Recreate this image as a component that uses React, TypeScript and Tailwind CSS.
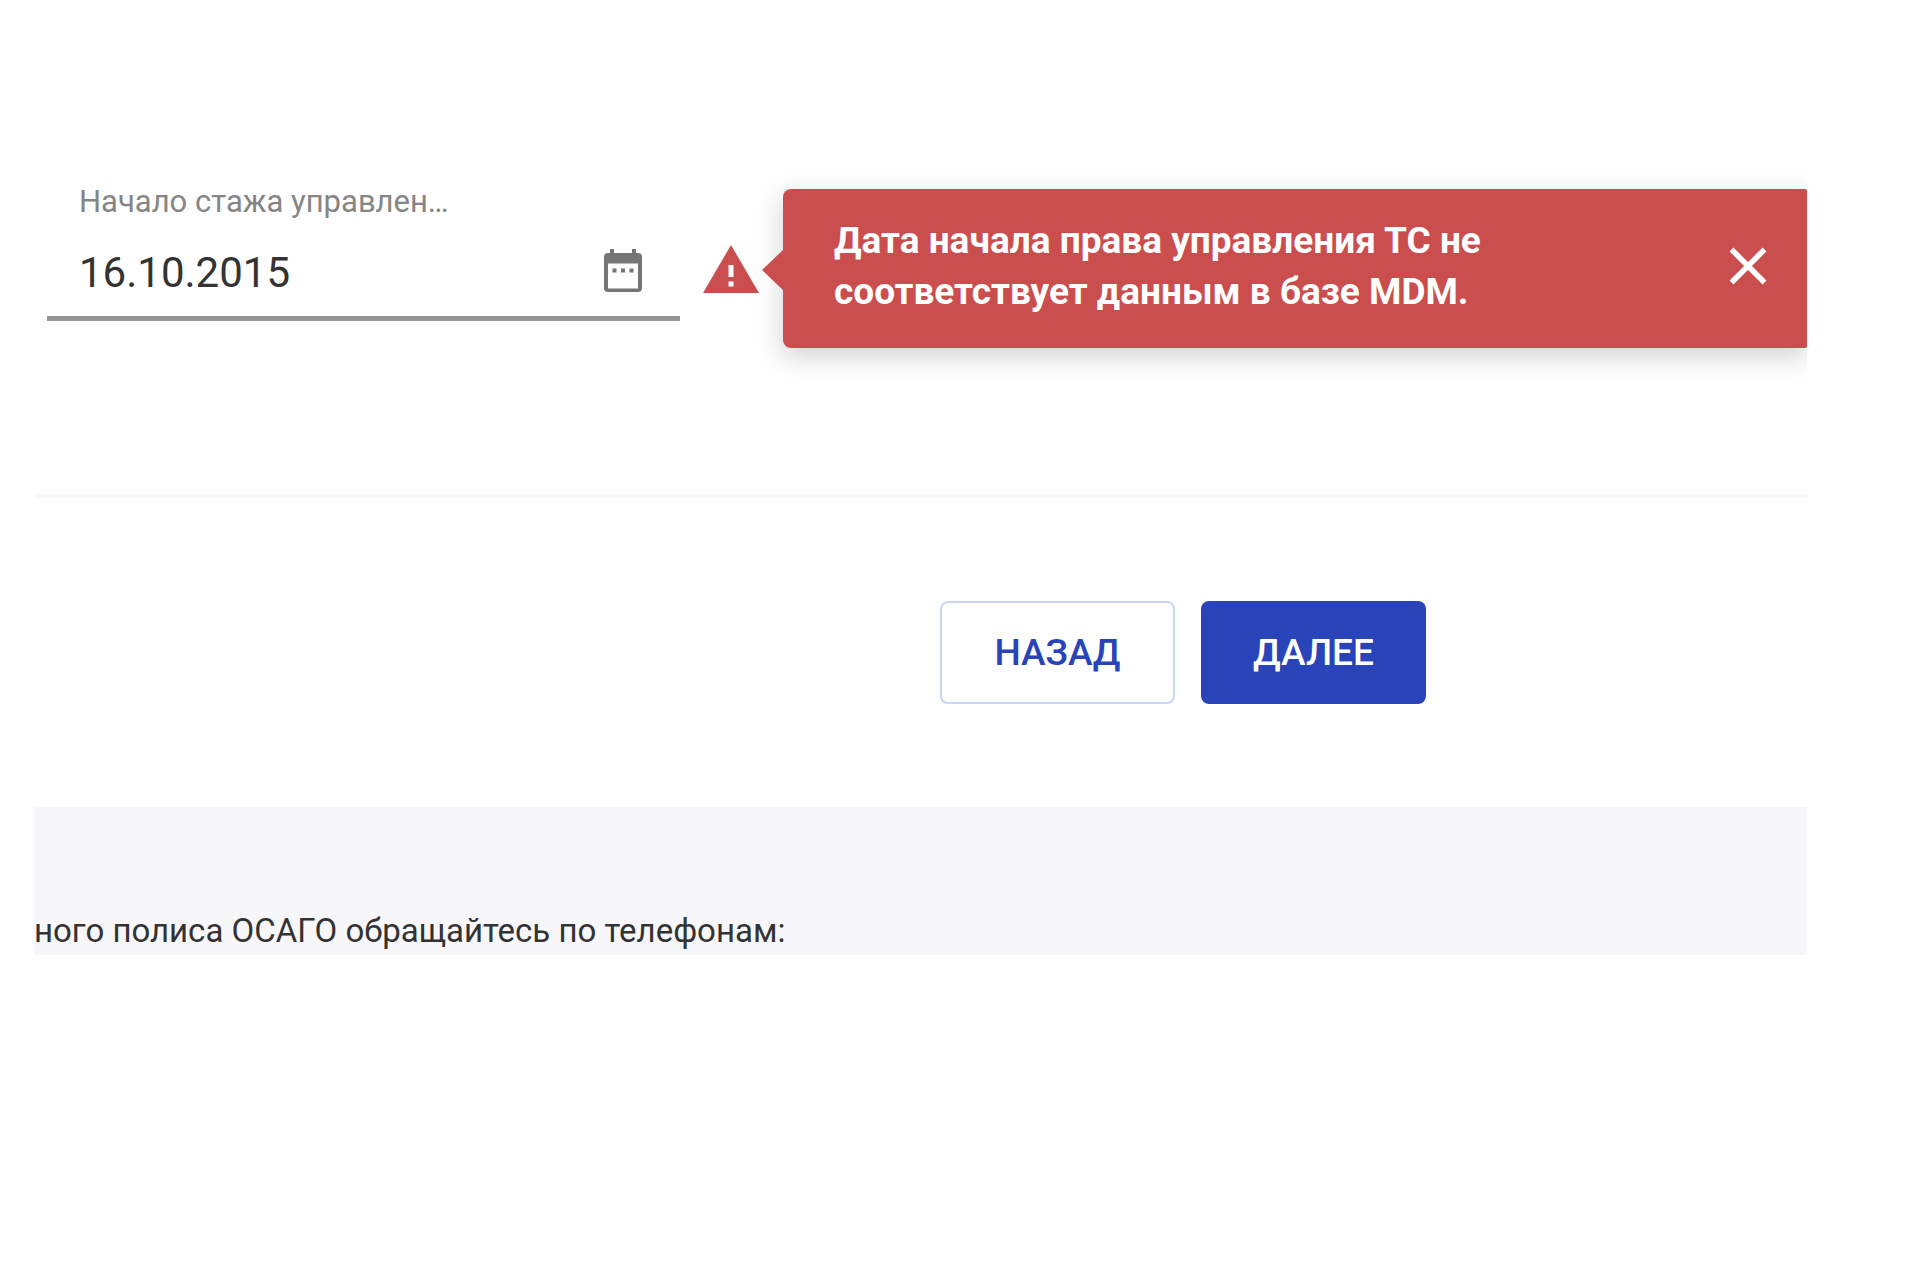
function CalendarIcon() {
  return (
    <svg viewBox="0 0 38 43" className="h-[43px] w-[38px]" aria-hidden="true">
      <path
        fill="#757575"
        fillRule="evenodd"
        d="M6 0h4v4h18V0h4v4h2a4 4 0 0 1 4 4v31a4 4 0 0 1-4 4H4a4 4 0 0 1-4-4V8a4 4 0 0 1 4-4h2zM4 14.500v25h30v-25z"
      />
      <path fill="#757575" d="M8.500 19.500h4v4h-4zM17 19.500h4v4h-4zM25.500 19.500h4v4h-4z" />
    </svg>
  );
}

function WarningIcon() {
  return (
    <svg viewBox="0 0 56 48" className="h-12 w-14 shrink-0" role="img" aria-label="Предупреждение">
      <path
        fill="#cb4e4e"
        fillRule="evenodd"
        d="M28 0 56 48H0zM25.500 20v12h5V20zM25.500 36.500v5h5v-5z"
      />
    </svg>
  );
}

function CloseIcon() {
  return (
    <svg viewBox="0 0 38 38" className="size-[38px]" aria-hidden="true">
      <path d="M2.500 2.500l33 33M35.500 2.500l-33 33" stroke="#fff" strokeWidth="5.500" />
    </svg>
  );
}

export default function App() {
  return (
    <div className="min-h-screen bg-[#fefefe] pr-[113px] pl-[34px] font-[Roboto,sans-serif] text-[#333]">
      <main className="overflow-hidden pt-[189px]">
        <form onSubmit={(e) => e.preventDefault()}>
          <div className="flex h-[159px] pl-[13px]">
            <div className="flex h-[132px] w-[633px] shrink-0 flex-col border-b-[5px] border-[#949494] pr-[38px] pl-8">
              <label htmlFor="experience" className="-mt-[3px] text-[31px] leading-8 text-[#858585]">
                Начало стажа управлен…
              </label>
              <div className="mt-[22px] flex items-center">
                <input
                  id="experience"
                  type="text"
                  defaultValue="16.10.2015"
                  className="h-16 min-w-0 flex-1 bg-transparent text-[42px] outline-none"
                />
                <button type="button" aria-label="Открыть календарь" className="pb-1">
                  <CalendarIcon />
                </button>
              </div>
            </div>
            <div className="mt-14 ml-[23px] shrink-0">
              <WarningIcon />
            </div>
            <div
              role="alert"
              className="relative ml-6 flex min-w-0 flex-1 items-start rounded-l-lg rounded-r-xs bg-[#cb4e4e] pt-[26px] pr-10 pl-[51px] shadow-[0_8px_26px_rgba(0,0,0,0.18)]"
            >
              <svg viewBox="0 0 22 42" className="absolute top-[60px] -left-[21px] h-[42px] w-[22px]" aria-hidden="true">
                <path fill="#cb4e4e" d="M22 0v42L0 21z" />
              </svg>
              <p className="flex-1 text-[37px] leading-[51px] font-bold text-white">
                Дата начала права управления ТС не
                <br />
                соответствует данным в базе MDM.
              </p>
              <button type="button" aria-label="Закрыть" className="mt-8">
                <CloseIcon />
              </button>
            </div>
          </div>
          <hr className="mt-[146px] border-t-4 border-[#f7f7f8]" />
          <div className="flex justify-end gap-[26px] pt-[103px] pr-[381px] pb-[103px]">
            <button
              type="button"
              className="h-[103px] w-[235px] rounded-lg border-2 border-[#cbd6f5] text-[37px] font-medium text-[#2943b8]"
            >
              НАЗАД
            </button>
            <button
              type="submit"
              className="h-[103px] w-[225px] rounded-lg bg-[#2943b8] text-[37px] font-medium text-white"
            >
              ДАЛЕЕ
            </button>
          </div>
        </form>
        <footer className="bg-[#f7f7fa] pt-[104px] pb-1 text-[33px] leading-10">
          <p>ного полиса ОСАГО обращайтесь по телефонам:</p>
        </footer>
      </main>
    </div>
  );
}
